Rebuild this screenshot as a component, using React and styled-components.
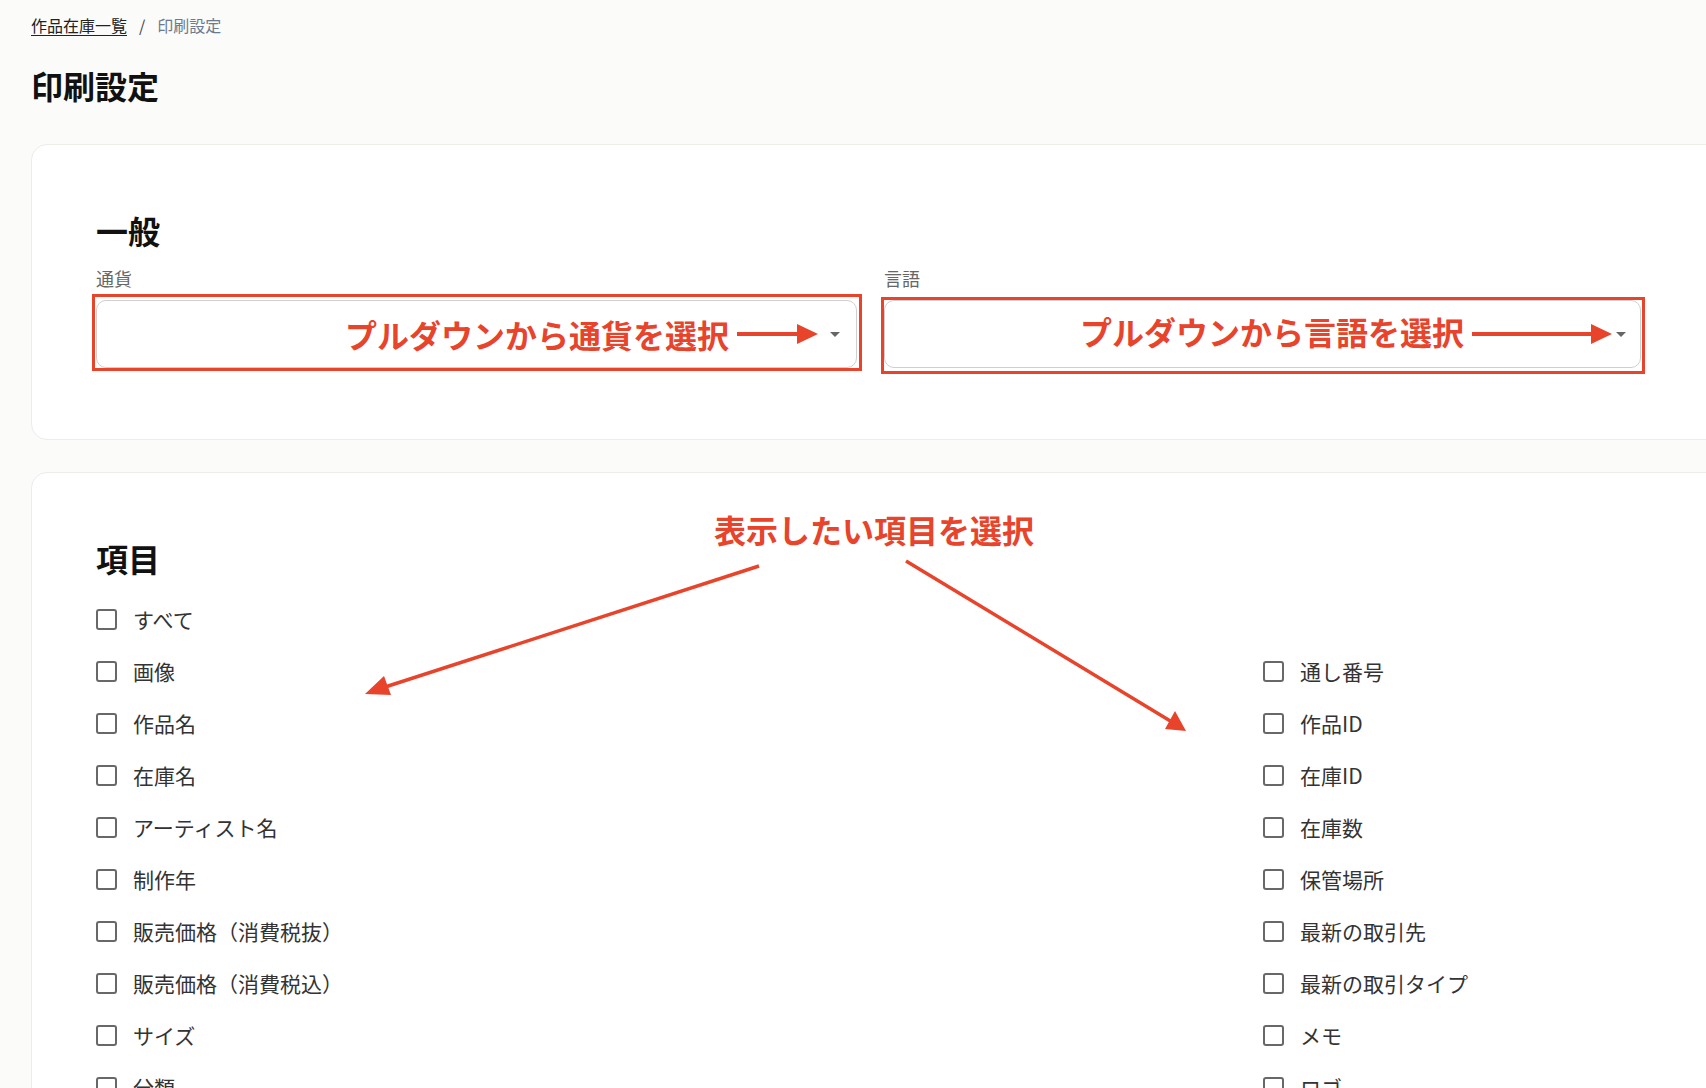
import React from "react";
import styled, { createGlobalStyle } from "styled-components";

const GlobalStyle = createGlobalStyle`
  html, body {
    margin: 0;
    padding: 0;
    background: #fbfbf9;
    overflow: hidden;
  }
  body {
    font-family: "Noto Sans CJK JP", "Noto Sans", sans-serif;
    color: #222;
  }
`;

const RED = "#e8432b";

const Page = styled.div`
  width: 1760px;
  height: 1088px;
  padding: 13px 0 0 31px;
  box-sizing: border-box;
  overflow: hidden;
`;

const Breadcrumb = styled.nav`
  display: flex;
  align-items: center;
  gap: 12px;
  font-size: 16px;
  line-height: 24px;
`;

const CrumbLink = styled.a`
  color: #222;
  text-decoration: underline;
  text-underline-offset: 3px;
`;

const CrumbSep = styled.span`
  color: #444;
`;

const CrumbCurrent = styled.span`
  color: #6b7a90;
`;

const Title = styled.h1`
  margin: 28px 0 39px;
  font-size: 32px;
  line-height: 40px;
  font-weight: 700;
  color: #111;
`;

const Card = styled.section`
  position: relative;
  background: #fff;
  border: 1px solid #eeece8;
  border-radius: 16px;
  padding: 61px 64px ${(p) => p.$bottom || 64}px;
  margin-bottom: 32px;
`;

const Heading = styled.h2`
  margin: 0 0 3px;
  font-size: 32px;
  line-height: 48px;
  font-weight: 700;
  color: #111;
`;

const Fields = styled.div`
  display: grid;
  grid-template-columns: 761px 757px;
  gap: 27px;
  margin-top: 12px;
`;

const Field = styled.div`
  display: flex;
  flex-direction: column;
  gap: 10px;
`;

const Label = styled.label`
  font-size: 18px;
  line-height: 24px;
  color: #666;
`;

const SelectWrap = styled.div`
  position: relative;
`;

const Frame = styled.div`
  position: absolute;
  top: ${(p) => p.$t}px;
  bottom: ${(p) => p.$b}px;
  left: ${(p) => p.$l}px;
  right: ${(p) => p.$r}px;
  border: 3.5px solid ${RED};
  pointer-events: none;
`;

const Select = styled.div`
  height: 68px;
  box-sizing: border-box;
  border: 1px solid #cfcfcf;
  border-radius: 10px;
  background: #fff;
  display: flex;
  align-items: center;
  justify-content: flex-end;
  padding-right: ${(p) => p.$pad}px;
`;

const Note = styled.span`
  color: ${RED};
  font-size: 32px;
  line-height: 40px;
  font-weight: 700;
  margin-right: 8px;
  margin-top: ${(p) => p.$shift || 0}px;
`;

const ArrowSvg = styled.svg`
  display: block;
  flex: none;
  margin-right: ${(p) => p.$after}px;
`;

const Caret = styled.span`
  width: 0;
  height: 0;
  border-left: 5px solid transparent;
  border-right: 5px solid transparent;
  border-top: 5px solid #666;
`;

const RightArrow = ({ len, after }) => (
  <ArrowSvg width={len} height="22" viewBox={`0 0 ${len} 22`} $after={after}>
    <line x1="0" y1="11" x2={len - 18} y2="11" stroke={RED} strokeWidth="4" />
    <polygon points={`${len - 21},1 ${len},11 ${len - 21},21`} fill={RED} />
  </ArrowSvg>
);

const Options = styled.div`
  margin-top: 11px;
`;

const Columns = styled.div`
  display: grid;
  grid-template-columns: 1167px 1fr;
`;

const Column = styled.div`
  display: flex;
  flex-direction: column;
`;

const Row = styled.label`
  display: flex;
  align-items: center;
  gap: 16px;
  height: 52px;
  font-size: 21px;
  color: #333;
`;

const Box = styled.span`
  width: 21px;
  height: 21px;
  box-sizing: border-box;
  border: 2px solid #686868;
  border-radius: 3px;
  flex: none;
`;

const Callout = styled.div`
  position: absolute;
  top: 36px;
  left: 682px;
  color: ${RED};
  font-size: 32px;
  line-height: 40px;
  font-weight: 700;
  white-space: nowrap;
`;

const CalloutArrows = styled.svg`
  position: absolute;
  top: 0;
  left: 0;
  pointer-events: none;
`;

const Check = ({ children }) => (
  <Row>
    <Box />
    <span>{children}</span>
  </Row>
);

const left = [
  "画像",
  "作品名",
  "在庫名",
  "アーティスト名",
  "制作年",
  "販売価格（消費税抜）",
  "販売価格（消費税込）",
  "サイズ",
  "分類",
];

const right = [
  "通し番号",
  "作品ID",
  "在庫ID",
  "在庫数",
  "保管場所",
  "最新の取引先",
  "最新の取引タイプ",
  "メモ",
  "ロゴ",
];

export default function App() {
  return (
    <>
      <GlobalStyle />
      <Page>
        <Breadcrumb>
          <CrumbLink>作品在庫一覧</CrumbLink>
          <CrumbSep>/</CrumbSep>
          <CrumbCurrent>印刷設定</CrumbCurrent>
        </Breadcrumb>
        <Title>印刷設定</Title>

        <Card $bottom={71}>
          <Heading>一般</Heading>
          <Fields>
            <Field>
              <Label>通貨</Label>
              <SelectWrap>
                <Select $pad={16}>
                  <Note>プルダウンから通貨を選択</Note>
                  <RightArrow len={81} after={12} />
                  <Caret />
                </Select>
                <Frame $t={-6} $b={-3} $l={-4} $r={-5} />
              </SelectWrap>
            </Field>
            <Field>
              <Label>言語</Label>
              <SelectWrap>
                <Select $pad={14}>
                  <Note $shift={-6}>プルダウンから言語を選択</Note>
                  <RightArrow len={140} after={4} />
                  <Caret />
                </Select>
                <Frame $t={-3} $b={-6} $l={-3} $r={-4} />
              </SelectWrap>
            </Field>
          </Fields>
        </Card>

        <Card>
          <Heading>項目</Heading>
          <Options>
            <Check>すべて</Check>
            <Columns>
              <Column>
                {left.map((t) => (
                  <Check key={t}>{t}</Check>
                ))}
              </Column>
              <Column>
                {right.map((t) => (
                  <Check key={t}>{t}</Check>
                ))}
              </Column>
            </Columns>
          </Options>

          <Callout>表示したい項目を選択</Callout>
          <CalloutArrows width="1300" height="300" viewBox="0 0 1300 300">
            <line x1="727" y1="93" x2="350" y2="215" stroke={RED} strokeWidth="3.5" />
            <polygon points="333,221 352,203 359,222" fill={RED} />
            <line x1="874" y1="88" x2="1140" y2="249" stroke={RED} strokeWidth="3.5" />
            <polygon points="1154,258 1133,256 1143,238" fill={RED} />
          </CalloutArrows>
        </Card>
      </Page>
    </>
  );
}
